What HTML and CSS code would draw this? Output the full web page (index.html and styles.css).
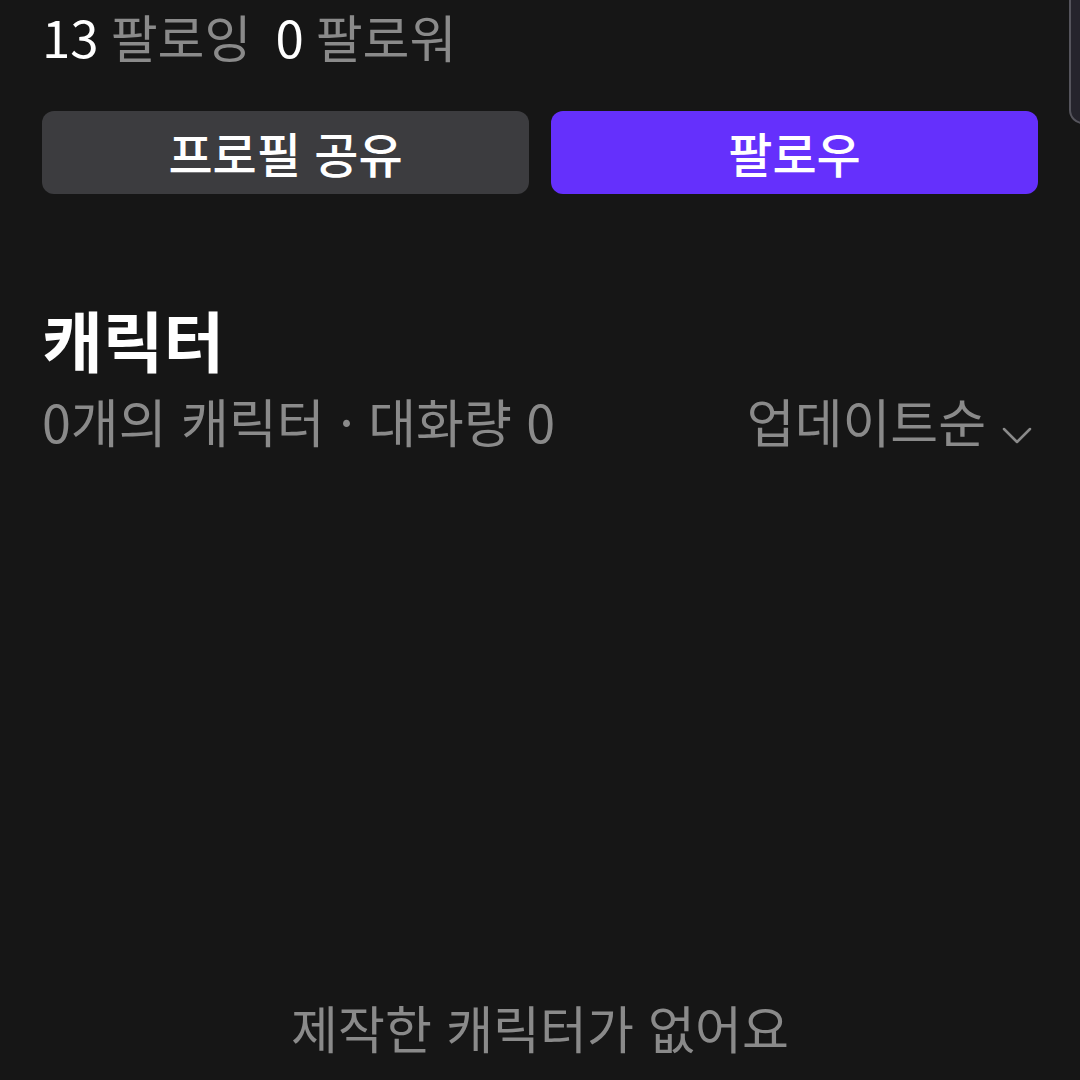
FILE: index.html
```html
<!DOCTYPE html>
<html lang="ko">
<head>
<meta charset="utf-8">
<link rel="stylesheet" href="styles.css">
</head>
<body>
<div class="page">
  <div class="edge-panel"></div>
  <div class="stats">
    <span class="num">13</span><span class="label">팔로잉</span>
    <span class="num second">0</span><span class="label">팔로워</span>
  </div>
  <div class="actions">
    <button class="btn btn-share">프로필 공유</button>
    <button class="btn btn-follow">팔로우</button>
  </div>
  <h2 class="section-title">캐릭터</h2>
  <div class="meta-row">
    <span class="meta">0개의 캐릭터 · 대화량 0</span>
    <span class="sort">업데이트순
      <svg class="chev" width="30" height="17" viewBox="0 0 30 17"><path d="M2 2 L15 15 L28 2" fill="none" stroke="#8a8a8a" stroke-width="2.5" stroke-linecap="round" stroke-linejoin="round"/></svg>
    </span>
  </div>
  <div class="empty">제작한 캐릭터가 없어요</div>
</div>
</body>
</html>
```

FILE: styles.css
```css
html, body {
  margin: 0;
  padding: 0;
  background: #161616;
}
body {
  font-family: "Noto Sans CJK KR", "Noto Sans", sans-serif;
  color: #ffffff;
}
.page {
  position: relative;
  width: 1080px;
  height: 1080px;
  overflow: hidden;
  box-sizing: border-box;
  padding: 0 42px;
  display: flex;
  flex-direction: column;
}
.edge-panel {
  position: absolute;
  left: 1069px;
  top: -20px;
  width: 40px;
  height: 144px;
  box-sizing: border-box;
  border: 2px solid #55545c;
  border-radius: 14px;
  background: #25242c;
}
.stats {
  font-size: 51px;
  line-height: 1.45;
  margin-top: 0;
  display: flex;
  align-items: baseline;
}
.num {
  color: #ffffff;
  margin-right: 12px;
}
.num.second {
  margin-left: 24px;
}
.label {
  color: #8a8a8a;
}
.actions {
  display: flex;
  gap: 22px;
  margin-top: 37px;
}
.btn {
  flex: 1;
  height: 83px;
  border: none;
  border-radius: 12px;
  font-family: inherit;
  font-size: 48px;
  font-weight: 500;
  color: #ffffff;
  padding: 0;
}
.btn-share {
  background: #3c3c3f;
}
.btn-follow {
  background: #6530fc;
}
.section-title {
  margin: 111px 0 0 0;
  font-size: 66px;
  font-weight: 700;
  line-height: 1;
}
.meta-row {
  display: flex;
  justify-content: space-between;
  align-items: center;
  margin-top: 19px;
  font-size: 52px;
  line-height: 1.2;
  color: #8a8a8a;
}
.sort {
  display: flex;
  align-items: center;
  gap: 16px;
  margin-right: 6px;
}
.chev {
  display: block;
  margin-top: 28px;
}
.empty {
  margin-top: auto;
  margin-bottom: 22px;
  text-align: center;
  font-size: 51px;
  color: #8a8a8a;
  line-height: 1.2;
}
```
